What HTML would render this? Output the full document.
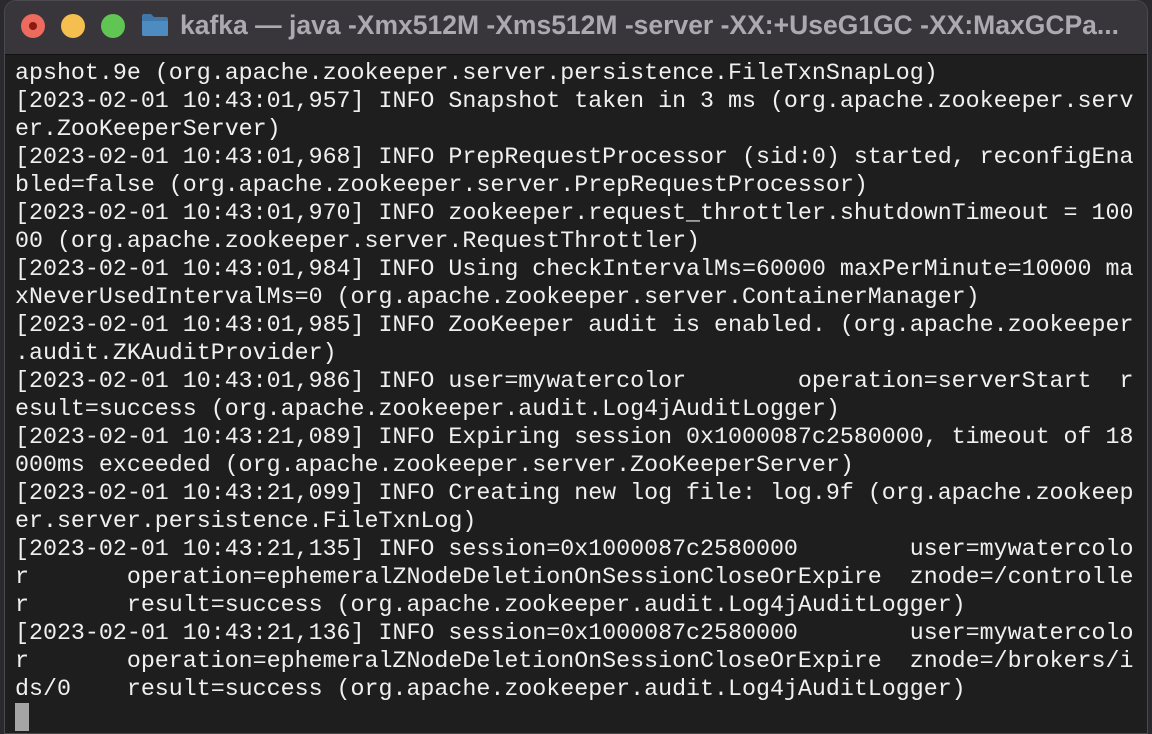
<!DOCTYPE html>
<html><head><meta charset="utf-8"><style>
html,body{margin:0;padding:0;width:1152px;height:734px;overflow:hidden;background:#2a2a2e;}
.win{position:absolute;left:4px;top:0;width:1144px;height:734px;background:#1e1e1e;border-radius:12px 12px 0 0;overflow:hidden;border:1px solid #4a4a4e;box-sizing:border-box;}
.tb{position:absolute;left:0;top:0;right:0;height:53px;background:#38363b;border-bottom:1px solid #111;}
.c{position:absolute;top:13px;width:24px;height:24px;border-radius:50%;}
.title{position:absolute;left:175px;top:9px;font:bold 26.5px "Liberation Sans",sans-serif;color:#acaab0;white-space:nowrap;}
pre{position:absolute;left:10px;top:58px;margin:0;font:23.3px/28px "Liberation Mono",monospace;color:#f0f0f0;}
.cur{position:absolute;left:10px;top:702px;width:14px;height:28px;background:#a5a5a5;}
</style></head><body>
<div class="win">
<div class="tb">
<div class="c" style="left:16px;background:#ec6a5e"><div style="position:absolute;left:8px;top:8px;width:8px;height:8px;border-radius:50%;background:#8c1a10"></div></div>
<div class="c" style="left:56px;background:#f4bf4f"></div>
<div class="c" style="left:96px;background:#61c554"></div>
<svg style="position:absolute;left:136px;top:12px" width="28" height="24" viewBox="0 0 28 24"><path d="M1 3 Q1 1 3 1 H10 L13 4 H25 Q27 4 27 6 V22 Q27 23 25 23 H3 Q1 23 1 21Z" fill="#3f77a8"/><path d="M1 8 H27 V22 Q27 23 25 23 H3 Q1 23 1 21Z" fill="#4d8bc0"/></svg>
<div class="title">kafka — java -Xmx512M -Xms512M -server -XX:+UseG1GC -XX:MaxGCPa...</div>
</div>
<pre>apshot.9e (org.apache.zookeeper.server.persistence.FileTxnSnapLog)
[2023-02-01 10:43:01,957] INFO Snapshot taken in 3 ms (org.apache.zookeeper.serv
er.ZooKeeperServer)
[2023-02-01 10:43:01,968] INFO PrepRequestProcessor (sid:0) started, reconfigEna
bled=false (org.apache.zookeeper.server.PrepRequestProcessor)
[2023-02-01 10:43:01,970] INFO zookeeper.request_throttler.shutdownTimeout = 100
00 (org.apache.zookeeper.server.RequestThrottler)
[2023-02-01 10:43:01,984] INFO Using checkIntervalMs=60000 maxPerMinute=10000 ma
xNeverUsedIntervalMs=0 (org.apache.zookeeper.server.ContainerManager)
[2023-02-01 10:43:01,985] INFO ZooKeeper audit is enabled. (org.apache.zookeeper
.audit.ZKAuditProvider)
[2023-02-01 10:43:01,986] INFO user=mywatercolor        operation=serverStart  r
esult=success (org.apache.zookeeper.audit.Log4jAuditLogger)
[2023-02-01 10:43:21,089] INFO Expiring session 0x1000087c2580000, timeout of 18
000ms exceeded (org.apache.zookeeper.server.ZooKeeperServer)
[2023-02-01 10:43:21,099] INFO Creating new log file: log.9f (org.apache.zookeep
er.server.persistence.FileTxnLog)
[2023-02-01 10:43:21,135] INFO session=0x1000087c2580000        user=mywatercolo
r       operation=ephemeralZNodeDeletionOnSessionCloseOrExpire  znode=/controlle
r       result=success (org.apache.zookeeper.audit.Log4jAuditLogger)
[2023-02-01 10:43:21,136] INFO session=0x1000087c2580000        user=mywatercolo
r       operation=ephemeralZNodeDeletionOnSessionCloseOrExpire  znode=/brokers/i
ds/0    result=success (org.apache.zookeeper.audit.Log4jAuditLogger)</pre>
<div class="cur"></div>
</div>
</body></html>
